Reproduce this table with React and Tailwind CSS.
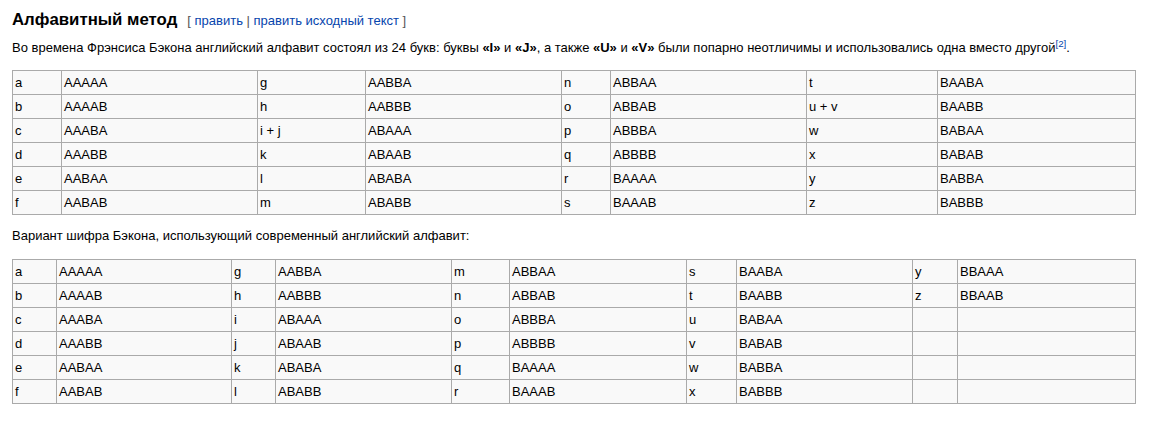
import React from 'react';

// первая таблица: 24 буквы (i+j и u+v совмещены)
const classicRows = [
  ['a', 'AAAAA', 'g', 'AABBA', 'n', 'ABBAA', 't', 'BAABA'],
  ['b', 'AAAAB', 'h', 'AABBB', 'o', 'ABBAB', 'u + v', 'BAABB'],
  ['c', 'AAABA', 'i + j', 'ABAAA', 'p', 'ABBBA', 'w', 'BABAA'],
  ['d', 'AAABB', 'k', 'ABAAB', 'q', 'ABBBB', 'x', 'BABAB'],
  ['e', 'AABAA', 'l', 'ABABA', 'r', 'BAAAA', 'y', 'BABBA'],
  ['f', 'AABAB', 'm', 'ABABB', 's', 'BAAAB', 'z', 'BABBB'],
];

// вторая таблица: современный алфавит, 26 букв
const modernRows = [
  ['a', 'AAAAA', 'g', 'AABBA', 'm', 'ABBAA', 's', 'BAABA', 'y', 'BBAAA'],
  ['b', 'AAAAB', 'h', 'AABBB', 'n', 'ABBAB', 't', 'BAABB', 'z', 'BBAAB'],
  ['c', 'AAABA', 'i', 'ABAAA', 'o', 'ABBBA', 'u', 'BABAA', '', ''],
  ['d', 'AAABB', 'j', 'ABAAB', 'p', 'ABBBB', 'v', 'BABAB', '', ''],
  ['e', 'AABAA', 'k', 'ABABA', 'q', 'BAAAA', 'w', 'BABBA', '', ''],
  ['f', 'AABAB', 'l', 'ABABB', 'r', 'BAAAB', 'x', 'BABBB', '', ''],
];

function WikiTable({ rows, cols }) {
  return (
    <div className={`grid ${cols} gap-px bg-[#aaaaaa] p-px w-fit`}>
      {rows.flat().map((text, i) => (
        <div key={i} className="bg-[#f9f9f9] h-[23px] flex items-center pl-[2px] whitespace-nowrap">
          {text}
        </div>
      ))}
    </div>
  );
}

export default function App() {
  return (
    <div className="bg-white w-[1154px] h-[424px] pl-[12px] text-black font-['Liberation_Sans',Arial,sans-serif] text-[13px]">
      <div className="pt-[10px] h-[31px] flex items-baseline leading-[20px]">
        <h3 className="text-[16.8px] font-bold">Алфавитный метод</h3>
        <span className="ml-[10px] text-[13px] text-[#555]">
          [ <a className="text-[#0645ad]">править</a> | <a className="text-[#0645ad]">править исходный текст</a> ]
        </span>
      </div>

      <p className="mt-[7px] leading-[20px]">
        Во времена Фрэнсиса Бэкона английский алфавит состоял из 24 букв: буквы <b>«I»</b> и <b>«J»</b>, а также{' '}
        <b>«U»</b> и <b>«V»</b> были попарно неотличимы и использовались одна вместо другой
        <sup className="text-[#0645ad]">[2]</sup>.
      </p>

      <div className="mt-[12px]">
        <WikiTable
          rows={classicRows}
          cols="grid-cols-[48px_195px_107px_195px_48px_195px_130px_197px]"
        />
      </div>

      <p className="mt-[11px] leading-[20px]">
        Вариант шифра Бэкона, использующий современный английский алфавит:
      </p>

      <div className="mt-[13px]">
        <WikiTable
          rows={modernRows}
          cols="grid-cols-[43px_174px_43px_175px_57px_176px_49px_175px_44px_177px]"
        />
      </div>
    </div>
  );
}
